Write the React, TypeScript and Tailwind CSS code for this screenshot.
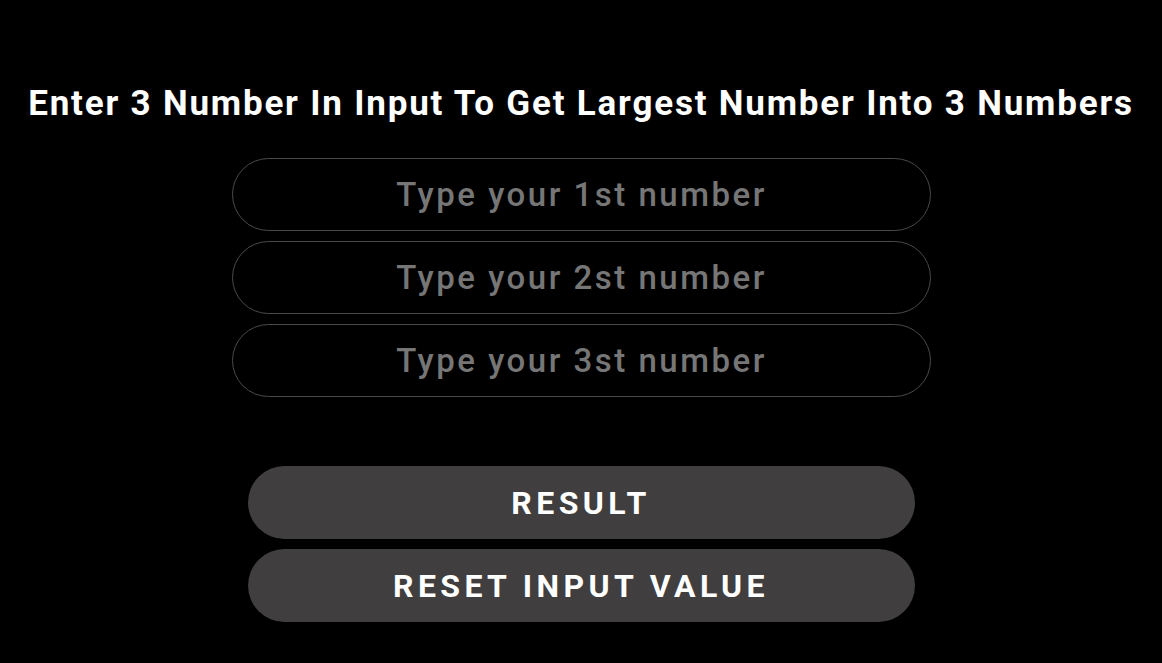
import { useState } from "react";

const ORDINALS = ["1st", "2st", "3st"];

export default function App() {
  const [values, setValues] = useState(["", "", ""]);
  const [result, setResult] = useState<number | null>(null);

  const handleChange = (i: number, v: string) => {
    const next = [...values];
    next[i] = v;
    setValues(next);
  };

  const handleResult = () => {
    const nums = values.map(Number).filter((n) => !Number.isNaN(n));
    if (nums.length) setResult(Math.max(...nums));
  };

  const handleReset = () => {
    setValues(["", "", ""]);
    setResult(null);
  };

  return (
    <div
      className="min-h-[663px] w-full bg-black flex flex-col items-center pt-[84px]"
      style={{ fontFamily: '"Roboto", "Liberation Sans", sans-serif' }}
    >
      <h1 className="text-white font-bold text-[35px] leading-[40px] tracking-[1.8px] whitespace-nowrap">
        Enter 3 Number In Input To Get Largest Number Into 3 Numbers
      </h1>

      <div className="flex flex-col gap-[10px] mt-[34px]">
        {ORDINALS.map((o, i) => (
          <input
            key={o}
            type="number"
            value={values[i]}
            onChange={(e) => handleChange(i, e.target.value)}
            placeholder={`Type your ${o} number`}
            className="w-[699px] h-[73px] rounded-full border border-[#4a4a4a] bg-transparent pl-[16px] text-center text-white text-[33px] font-medium tracking-[2.5px] placeholder:text-[#767676] outline-none"
          />
        ))}
      </div>

      <div className="flex flex-col gap-[10px] mt-[69px]">
        <button
          onClick={handleResult}
          className="w-[667px] h-[73px] rounded-full bg-[#403e3f] text-white text-[32px] font-bold tracking-[4.4px]"
        >
          {result === null ? "RESULT" : `RESULT: ${result}`}
        </button>
        <button
          onClick={handleReset}
          className="w-[667px] h-[73px] rounded-full bg-[#403e3f] text-white text-[32px] font-bold tracking-[4.4px]"
        >
          RESET INPUT VALUE
        </button>
      </div>
    </div>
  );
}
